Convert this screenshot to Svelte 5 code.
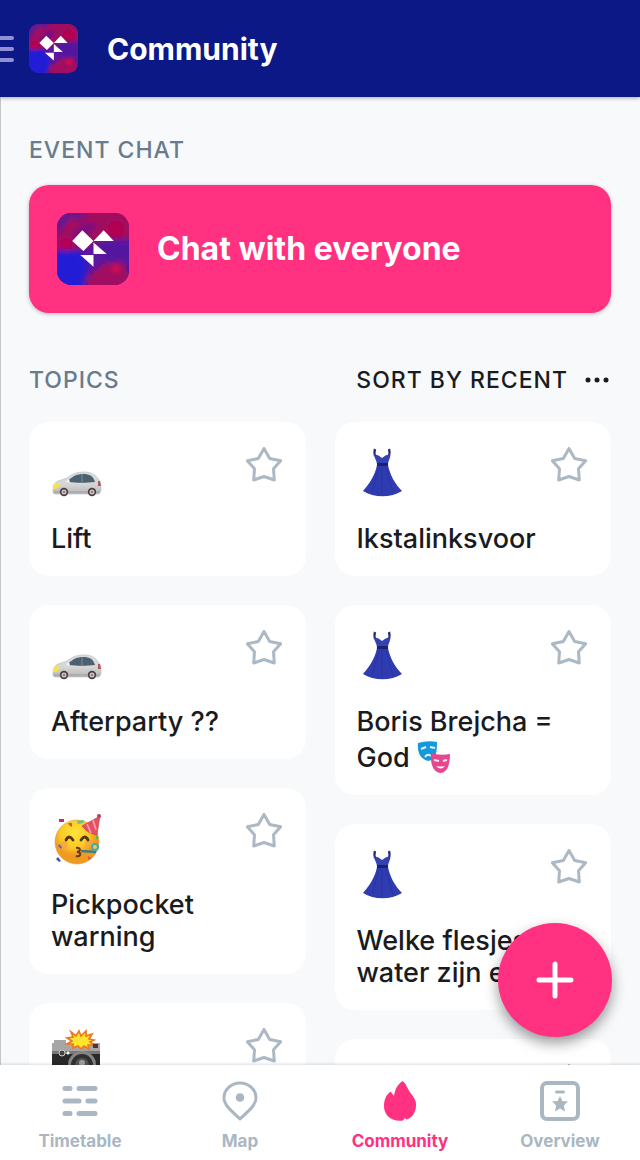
<script>
  const left = [
    { icon: 'car', title: 'Lift' },
    { icon: 'car', title: 'Afterparty ??' },
    { icon: 'party', title: 'Pickpocket warning' },
    { icon: 'camera', title: '' }
  ];
  const right = [
    { icon: 'dress', title: 'Ikstalinksvoor' },
    { icon: 'dress', title: 'Boris Brejcha = God', masks: true },
    { icon: 'dress', title: 'Welke flesjes water zijn er' },
    { icon: 'dress', title: '' }
  ];
  const tabs = ['Timetable', 'Map', 'Community', 'Overview'];
</script>

{#snippet logo(id)}
  <svg class="logo" viewBox="0 0 71 71" aria-hidden="true">
    <defs>
      <clipPath id="{id}-clip"><rect width="71" height="71" rx="14" /></clipPath>
      <filter id="{id}-blur" x="-30%" y="-30%" width="160%" height="160%"><feGaussianBlur stdDeviation="2.5" /></filter>
    </defs>
    <g clip-path="url(#{id}-clip)">
      <rect width="71" height="71" fill="#5d17a0" />
      <g filter="url(#{id}-blur)">
        <path d="M-8-8h87v33L50 26 22 35-8 37z" fill="#a0085f" />
        <path d="M-4 8 10-8h28L20 9 8 14-4 23z" fill="#6a148c" />
        <path d="M16 20 28 9l12 2-8 9-14 8z" fill="#7a1180" />
        <path d="M-8 38 22 38 31 52 22 79H-8z" fill="#241bd6" />
        <path d="M36 28h43v23L49 46z" fill="#53199f" />
        <path d="M30 63 46 50 65 48l14 31H30z" fill="#a00b62" />
        <circle cx="58" cy="55" r="4" fill="#d70b48" />
        <circle cx="9" cy="31" r="6" fill="#b60554" />
        <path d="M10 14l8-8" stroke="#b80a50" stroke-width="4" />
        <circle cx="58" cy="16" r="8" fill="#b50451" />
      </g>
      <path d="M25 17 36 27.500 26 37.500 15 27.500zM46 17 56 27.500H36zM36 29 49 40.500H36zM23 41.500H36V53z" fill="#fff" />
    </g>
  </svg>
{/snippet}

{#snippet emoji(kind)}
  <svg class="emoji" viewBox="0 0 52 52" aria-hidden="true">
    {#if kind === 'car'}
      <defs>
        <linearGradient id="car-body" x2="0" y2="1"><stop offset="0" stop-color="#d9dcde" /><stop offset=".55" stop-color="#d6d6d7" /><stop offset="1" stop-color="#b6b6b8" /></linearGradient>
      </defs>
      <g transform="translate(0 3)">
        <path d="M2 42c0-6 1-9 5-11l9-3c6-5 11-6 17-6 8 0 12 3 15 8 2 3 2 6 2 11l-2 3H5q-3 0-3-2z" fill="url(#car-body)" stroke="#b7babd" stroke-width=".6" />
        <path d="M18 30c4-4 8-6 14-6 7 0 10 2 12 8-8 1-19 1-26 0z" fill="#4b6170" />
        <path d="M31 24v8" stroke="#79909b" />
        <path d="M2 39c0-5 2-6 5-6 3 2 1 5-3 6z" fill="#f4e34d" />
        <path d="M47 31h2l1 5h-3z" fill="#b6525a" />
        <path d="m15 32 2-3 2 2-1 2z" fill="#eceeef" />
        <path d="M3 42h46" stroke="#a09da0" />
        <circle cx="13" cy="42" r="4.200" fill="#493d40" /><circle cx="13" cy="42" r="2.500" fill="#d0c9ca" /><circle cx="13" cy="42" r="1" fill="#815e62" />
        <circle cx="41" cy="42" r="4.200" fill="#493d40" /><circle cx="41" cy="42" r="2.500" fill="#d0c9ca" /><circle cx="41" cy="42" r="1" fill="#815e62" />
      </g>
    {:else if kind === 'dress'}
      <path d="M18 2c-1 3-1 4 0 7M32 2c1 3 1 4 0 7" fill="none" stroke="#292f77" stroke-width="2.400" />
      <path d="M17 7q5 1 8 4 3-3 8-4c1 4-2 6-2 11H20c0-5-3-7-3-11z" fill="#3441b1" />
      <path d="M20 18h11c2 10 7 19 14 26-11 7-28 7-39 0 7-8 12-16 14-26z" fill="#2f3bb0" />
      <path d="M22 20 15 45M25 20v28M29 20l7 26" stroke="#2a359f" />
      <path d="M20 16h11v3H20z" fill="#1a2171" />
    {:else if kind === 'party'}
      <defs><radialGradient id="face" cx=".45" cy=".3"><stop offset="0" stop-color="#ffe43b" /><stop offset=".65" stop-color="#fbc927" /><stop offset="1" stop-color="#ee9b20" /></radialGradient></defs>
      <circle cx="26" cy="29" r="22" fill="url(#face)" stroke="#df9a37" stroke-width=".6" />
      <circle cx="13" cy="32" r="4" fill="#f6a343" opacity=".7" /><circle cx="38" cy="31" r="4" fill="#f6a343" opacity=".7" />
      <path d="M31 13 49 3l-3 19q-9-1-15-9z" fill="#e94f60" stroke="#b94156" stroke-width=".6" />
      <path d="m36 11 4 9m2-13 3 10" stroke="#f7a1ac" stroke-width="1.700" />
      <circle cx="48" cy="3" r="2" fill="#bc3b57" />
      <path d="M15 27q3-6 7 0M30 27q4-6 7 0" stroke="#533517" stroke-width="2.800" stroke-linecap="round" fill="none" />
      <path d="M25 35c5-1 5 3 1 4 5 0 4 5-1 4" fill="none" stroke="#65391f" stroke-width="2" />
      <path d="m30 38 15 1" stroke="#397f8b" stroke-width="2.500" />
      <circle cx="44" cy="34" r="3" fill="#f7c943" stroke="#3cabba" stroke-width="2" />
      <path d="M8 6h5v3H8z" fill="#c72296" /><path d="m17 10 4 0 0 4-3-2z" fill="#e35431" /><path d="m26 8 7-1-1 3-5 1z" fill="#62c491" />
      <path d="m8 31 3 3-1 2-3-3z" fill="#7361a4" /><path d="m7 44 3 4-2 1-3-3z" fill="#3d58ad" /><path d="m45 22 3 2-3 3z" fill="#6bb850" /><path d="m37 43 4 2-4 2z" fill="#e65651" />
    {:else}
      <g transform="translate(-1 5)">
        <path d="M2 11h48v36H2z" fill="#292929" />
        <path d="M2 10h48v10H2zM4 7h12v4H4z" fill="#a6a6a6" />
        <path d="M2 18h48v3H2z" fill="#777" />
        <circle cx="32" cy="32" r="14" fill="#858585" /><circle cx="32" cy="32" r="11" fill="#303030" /><circle cx="32" cy="32" r="7" fill="#555" /><circle cx="32" cy="30" r="3" fill="#a0a0a0" />
        <circle cx="12" cy="20" r="3" fill="#444" stroke="#ccc" /><circle cx="18" cy="20" r="1.500" fill="#fff" />
        <path d="m29-2 2 5 5-5 0 5 6-2-3 5 5 1-4 2 4 3-6 0 1 4-5-3-3 3-3-3-5 2 0-4-6 0 5-3-5-3 6-1-2-5 5 4z" fill="#ffe52e" stroke="#ed7821" stroke-width="1.700" />
        <path d="M43 11h5v4h-5z" fill="#59302e" />
      </g>
    {/if}
  </svg>
{/snippet}

{#snippet card(topic)}
  <article class="card">
    <div class="card-top">
      {@render emoji(topic.icon)}
      <button class="star" aria-label="Favourite">
        <svg viewBox="0 0 36 36"><path d="m18 1.500 5.700 10 11 2.300-7.200 8 .8 11.200L18 29.500 7.700 33l.8-11.200-7.200-8 11-2.300z" /></svg>
      </button>
    </div>
    <h3>{topic.title}{#if topic.masks}{' '}<svg class="masks" viewBox="0 0 34 34" aria-hidden="true">
          <path d="M1 3Q11 0 20 2c0 10-1 18-9 19C3 19 0 12 1 3z" fill="#1499dd" />
          <path d="m4 9 5-2m4 0 5 1M8 17q3-4 6-1" fill="none" stroke="#dff5ff" stroke-width="2" />
          <path d="M14 13q9 3 19 1c0 9-2 19-10 19-7-1-10-10-9-20z" fill="#e6488d" />
          <path d="m17 20 5 1m4 0 4-1" stroke="#ffe5f0" stroke-width="2" /><path d="M19 26q5 1 9 0-4 5-9 0z" fill="#fff" />
        </svg>{/if}</h3>
  </article>
{/snippet}

<div class="app">
  <header>
    <button class="menu" aria-label="Menu"><i></i><i></i><i></i></button>
    <div class="header-logo">{@render logo('head')}</div>
    <h1>Community</h1>
  </header>

  <div class="stage">
    <main>
      <h2>EVENT CHAT</h2>
      <button class="chat">
        <span class="chat-logo">{@render logo('chat')}</span>
        <span>Chat with everyone</span>
      </button>
      <div class="topics-head">
        <h2>TOPICS</h2>
        <button class="sort">SORT BY RECENT
          <svg viewBox="0 0 24 8" aria-hidden="true"><circle cx="3" cy="4" r="2.500" /><circle cx="12" cy="4" r="2.500" /><circle cx="21" cy="4" r="2.500" /></svg>
        </button>
      </div>
      <div class="columns">
        <div class="column">{#each left as topic}{@render card(topic)}{/each}</div>
        <div class="column">{#each right as topic}{@render card(topic)}{/each}</div>
      </div>
    </main>
    <button class="fab" aria-label="Add topic"><svg viewBox="0 0 40 40"><path d="M20 4v32M4 20h32" /></svg></button>
  </div>

  <nav>
    {#each tabs as tab}
      <a href="#{tab.toLowerCase()}" class:active={tab === 'Community'}>
        <svg viewBox="0 0 40 40" aria-hidden="true">
          {#if tab === 'Timetable'}
            <path d="M5 7.500h5M19 7.500h16M5 20h14M28 20h7M5 32.500h5M19 32.500h16" stroke-width="5" />
          {:else if tab === 'Map'}
            <path d="M20 38C14 32 4 25 4 17a16 15 0 0 1 32 0c0 8-10 15-16 21z" stroke-width="3" /><circle class="solid" cx="20" cy="16.500" r="4.300" />
          {:else if tab === 'Community'}
            <path class="solid" d="M22.500 0c4 3 5 8 8 12 4 5 6 8 5.500 13-.5 7-4 12-9.500 13.500L25 37l-2 2.500C11 41 4 34 4 25c0-6 2-11 6.500-14.500L14 15c1-7 4-12 8.500-15z" />
          {:else}
            <rect x="2" y="2" width="36" height="36" rx="5" stroke-width="4" /><path d="M16.500 11h7" stroke-width="3" /><path class="solid" d="m20 15 2.300 5 5.700.6-4.200 3.900 1.300 6L20 27.500l-5.100 3 1.300-6-4.200-3.900 5.700-.6z" />
          {/if}
        </svg>
        <span>{tab}</span>
      </a>
    {/each}
  </nav>
</div>

<style>
  :global(body) { margin: 0; background: #f7f9fb; }
  * { box-sizing: border-box; }
  .app { height: 100vh; display: flex; flex-direction: column; overflow: hidden; color: #191b20; font-family: Inter, "Liberation Sans", sans-serif; }
  button { border: 0; padding: 0; background: none; color: inherit; font: inherit; cursor: pointer; }
  h1, h2, h3 { margin: 0; }
  svg { display: block; }
  header { flex: none; height: 97px; display: flex; align-items: center; background: #0c1885; color: #fff; box-shadow: 0 1px 4px #0005; z-index: 2; }
  .menu { width: 14px; height: 28px; display: flex; flex-direction: column; justify-content: center; gap: 7px; }
  .menu i { height: 4px; background: #8f90d6; border-radius: 0 2px 2px 0; }
  .header-logo { width: 49px; margin: 0 29px 0 15px; }
  .logo { width: 100%; }
  h1 { font-size: 30px; font-weight: 700; line-height: 40px; }
  .stage { flex: 1; min-height: 0; position: relative; border-left: 1px solid #c3c5ca; }
  main { height: 100%; overflow: hidden; padding: 37px 29px 0 28px; }
  h2 { font-size: 23px; font-weight: 500; line-height: 32px; letter-spacing: 1px; color: #697b8c; }
  .chat { width: 100%; margin-top: 19px; padding: 28px; display: flex; align-items: center; gap: 28px; border-radius: 20px; background: #ff3180; color: #fff; box-shadow: 0 1px 4px #0004; font-size: 32px; font-weight: 700; line-height: 40px; text-align: left; }
  .chat-logo { width: 72px; flex: none; }
  .topics-head { margin: 51px 0 26px; display: flex; justify-content: space-between; align-items: center; }
  .sort { display: flex; align-items: center; gap: 17px; padding-right: 2px; font-size: 23px; font-weight: 500; line-height: 32px; letter-spacing: 1px; }
  .sort svg { width: 24px; fill: #191b20; }
  .columns { display: grid; grid-template-columns: 1fr 1fr; gap: 29px; }
  .column { display: flex; flex-direction: column; gap: 29px; min-width: 0; }
  .card { padding: 25px 24px 21px 22px; border-radius: 20px; background: #fff; }
  .card-top { display: flex; justify-content: space-between; align-items: flex-start; margin-bottom: 24px; }
  .emoji { width: 52px; height: 52px; }
  .star { width: 36px; height: 36px; }
  .star path { fill: none; stroke: #acb9c4; stroke-width: 3; stroke-linejoin: round; }
  h3 { min-height: 32px; font-size: 27px; font-weight: 500; line-height: 32px; }
  .masks { display: inline-block; width: 34px; height: 34px; margin-top: 2px; vertical-align: -7px; }
  .fab { position: absolute; right: 28px; bottom: 28px; width: 114px; height: 114px; display: grid; place-items: center; border-radius: 50%; background: #ff3180; box-shadow: 0 6px 14px #0006; }
  .fab svg { width: 40px; }
  .fab path { stroke: #fff; stroke-width: 5; stroke-linecap: round; }
  nav { flex: none; height: 95px; display: grid; grid-template-columns: repeat(4, 1fr); background: #fff; box-shadow: 0 -1px 3px #0002; z-index: 2; }
  nav a { display: flex; flex-direction: column; align-items: center; gap: 8px; padding-top: 16px; color: #aab7c3; font-size: 17px; font-weight: 700; line-height: 24px; text-decoration: none; }
  nav svg { width: 40px; height: 40px; fill: none; stroke: currentColor; stroke-linecap: round; stroke-linejoin: round; }
  .solid { fill: currentColor; stroke: none; }
  nav .active { color: #ff3180; }
</style>
